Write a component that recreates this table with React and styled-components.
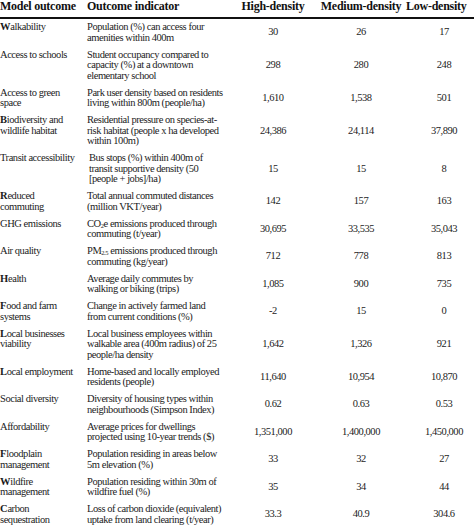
import React from "react";
import styled, { createGlobalStyle } from "styled-components";

const GlobalStyle = createGlobalStyle`
  html, body {
    margin: 0;
    padding: 0;
    background: #ffffff;
    overflow: hidden;
  }
  body {
    font-family: "Liberation Serif", "Times New Roman", serif;
    color: #1c1c1c;
  }
`;

const rows = [
  { outcome: ["Walkability"], bold: true, indicator: ["Population (%) can access four", "amenities within 400m"], values: ["30", "26", "17"] },
  { outcome: ["Access to schools"], indicator: ["Student occupancy compared to", "capacity (%) at a downtown", "elementary school"], values: ["298", "280", "248"] },
  { outcome: ["Access to green", "space"], indicator: ["Park user density based on residents", "living within 800m (people/ha)"], values: ["1,610", "1,538", "501"] },
  { outcome: ["Biodiversity and", "wildlife habitat"], bold: true, indicator: ["Residential pressure on species-at-", "risk habitat (people x ha developed", "within 100m)"], values: ["24,386", "24,114", "37,890"] },
  { outcome: ["Transit accessibility"], indent: true, indicator: ["Bus stops (%) within 400m of", "transit supportive density (50", "[people + jobs]/ha)"], values: ["15", "15", "8"] },
  { outcome: ["Reduced", "commuting"], bold: true, indicator: ["Total annual commuted distances", "(million VKT/year)"], values: ["142", "157", "163"] },
  { outcome: ["GHG emissions"], indicator: [<>CO<sub>2</sub>e emissions produced through</>, "commuting (t/year)"], values: ["30,695", "33,535", "35,043"] },
  { outcome: ["Air quality"], indicator: [<>PM<sub>2.5</sub> emissions produced through</>, "commuting (kg/year)"], values: ["712", "778", "813"] },
  { outcome: ["Health"], bold: true, indicator: ["Average daily commutes by", "walking or biking (trips)"], values: ["1,085", "900", "735"] },
  { outcome: ["Food and farm", "systems"], bold: true, indicator: ["Change in actively farmed land", "from current conditions (%)"], values: ["-2", "15", "0"] },
  { outcome: ["Local businesses", "viability"], bold: true, indicator: ["Local business employees within", "walkable area (400m radius) of 25", "people/ha density"], values: ["1,642", "1,326", "921"] },
  { outcome: ["Local employment"], bold: true, indicator: ["Home-based and locally employed", "residents (people)"], values: ["11,640", "10,954", "10,870"] },
  { outcome: ["Social diversity"], indicator: ["Diversity of housing types within", "neighbourhoods (Simpson Index)"], values: ["0.62", "0.63", "0.53"] },
  { outcome: ["Affordability"], indicator: ["Average prices for dwellings", "projected using 10-year trends ($)"], values: ["1,351,000", "1,400,000", "1,450,000"] },
  { outcome: ["Floodplain", "management"], bold: true, indicator: ["Population residing in areas below", "5m elevation (%)"], values: ["33", "32", "27"] },
  { outcome: ["Wildfire", "management"], bold: true, indicator: ["Population residing within 30m of", "wildfire fuel (%)"], values: ["35", "34", "44"] },
  { outcome: ["Carbon", "sequestration"], bold: true, indicator: ["Loss of carbon dioxide (equivalent)", "uptake from land clearing (t/year)"], values: ["33.3", "40.9", "304.6"] },
];

const OutcomeLabel = ({ lines, bold }) => (
  <LabelCell>
    {lines.map((line, i) => (
      <Line key={i}>
        {i === 0 && bold ? (
          <>
            <FirstLetter>{line[0]}</FirstLetter>
            {line.slice(1)}
          </>
        ) : (
          line
        )}
      </Line>
    ))}
  </LabelCell>
);

export default function App() {
  return (
    <>
      <GlobalStyle />
      <Table>
        <HeaderRow>
          <HeadCell>Model outcome</HeadCell>
          <HeadCell>Outcome indicator</HeadCell>
          <HeadCell $center>High-density</HeadCell>
          <HeadCell $center>Medium-density</HeadCell>
          <HeadCell $shift>Low-density</HeadCell>
        </HeaderRow>
        {rows.map((row, i) => (
          <Row key={i}>
            <OutcomeLabel lines={row.outcome} bold={row.bold} />
            <LabelCell $indent={row.indent}>
              {row.indicator.map((line, j) => (
                <Line key={j}>{line}</Line>
              ))}
            </LabelCell>
            {row.values.map((v, k) => (
              <ValueCell key={k}>{v}</ValueCell>
            ))}
          </Row>
        ))}
      </Table>
    </>
  );
}

const Table = styled.div`
  width: 484px;
  display: flex;
  flex-direction: column;
`;

const HeaderRow = styled.div`
  display: grid;
  grid-template-columns: 87px 141px 90px 86px 80px;
  height: 17px;
  border-bottom: 2px solid #111;
`;

const HeadCell = styled.div`
  font-size: 12px;
  font-weight: 700;
  line-height: 13px;
  letter-spacing: -0.25px;
  color: #111;
  white-space: nowrap;
  text-align: ${(p) => (p.$center ? "center" : "left")};
  padding-left: ${(p) => (p.$shift ? "2px" : "0")};
`;

const Row = styled.div`
  display: grid;
  grid-template-columns: 87px 141px 90px 86px 80px;
  padding: 3px 0 3.5px;
`;

const LabelCell = styled.div`
  display: flex;
  flex-direction: column;
  padding-left: ${(p) => (p.$indent ? "2px" : "0")};
`;

const Line = styled.div`
  font-size: 10.5px;
  line-height: 10.5px;
  letter-spacing: -0.45px;
  white-space: nowrap;

  sub {
    font-size: 6.5px;
    line-height: 0;
    vertical-align: -1px;
  }
`;

const FirstLetter = styled.span`
  font-weight: 700;
  letter-spacing: -0.2px;
`;

const ValueCell = styled.div`
  align-self: center;
  text-align: center;
  font-size: 10.5px;
  line-height: 10.5px;
  letter-spacing: -0.45px;
`;
